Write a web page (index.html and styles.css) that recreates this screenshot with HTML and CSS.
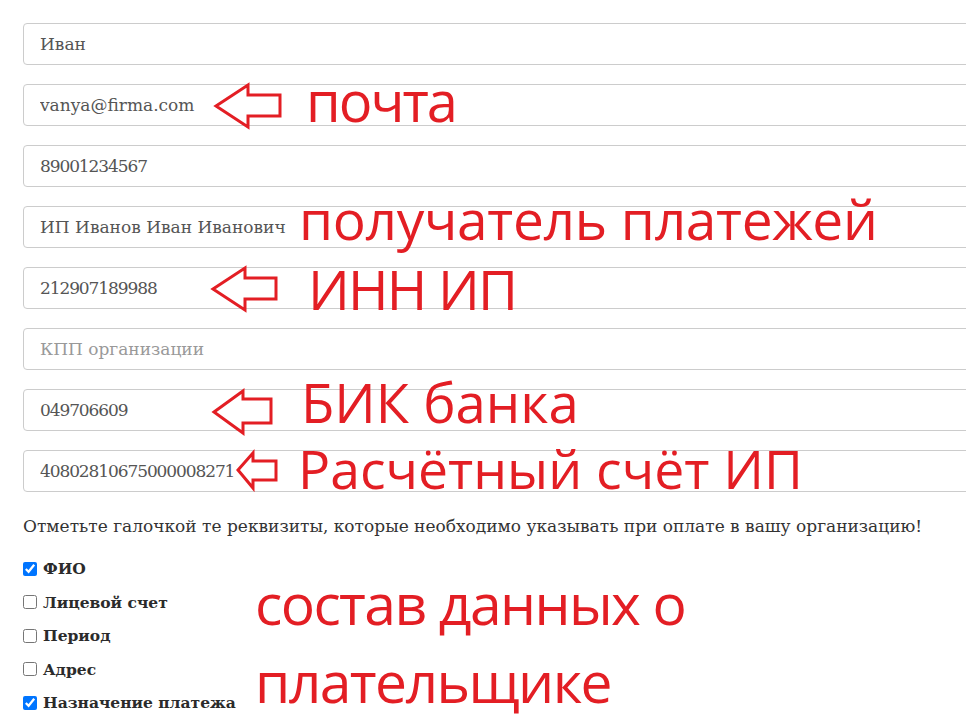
FILE: index.html
```html
<!DOCTYPE html>
<html lang="ru">
<head>
<meta charset="utf-8">
<title>Реквизиты</title>
<link rel="stylesheet" href="styles.css">
</head>
<body>
<div class="page">
  <form class="form">
    <div class="fields">
      <input class="field" type="text" value="Иван">
      <input class="field" type="text" value="vanya@firma.com">
      <input class="field field-num" type="text" value="89001234567">
      <input class="field" type="text" value="ИП Иванов Иван Иванович">
      <input class="field field-num" type="text" value="212907189988">
      <input class="field" type="text" placeholder="КПП организации">
      <input class="field field-num" type="text" value="049706609">
      <input class="field field-num" type="text" value="40802810675000008271">
    </div>
    <p class="hint">Отметьте галочкой те реквизиты, которые необходимо указывать при оплате в вашу организацию!</p>
    <ul class="checks">
      <li class="check"><label class="check-label"><input class="check-box" type="checkbox" checked>ФИО</label></li>
      <li class="check"><label class="check-label"><input class="check-box" type="checkbox">Лицевой счет</label></li>
      <li class="check"><label class="check-label"><input class="check-box" type="checkbox">Период</label></li>
      <li class="check"><label class="check-label"><input class="check-box" type="checkbox">Адрес</label></li>
      <li class="check"><label class="check-label"><input class="check-box" type="checkbox" checked>Назначение платежа</label></li>
    </ul>
  </form>

  <div class="annotations">
    <svg class="arrows" width="966" height="722" viewBox="0 0 966 722">
      <polygon class="arrow" points="216,106 248,85 248,95 280,95 280,116 248,116 248,127"/>
      <polygon class="arrow" points="213,289 245,268 245,278 276,278 276,299 245,299 245,310"/>
      <polygon class="arrow" points="214,412 243,391 243,399 271,399 271,423 243,423 243,433"/>
      <polygon class="arrow" points="238,470 253,453 253,461 276,461 276,480 253,480 253,488"/>
    </svg>
    <div class="mark mark-mail">почта</div>
    <div class="mark mark-payee">получатель платежей</div>
    <div class="mark mark-inn">ИНН ИП</div>
    <div class="mark mark-bik">БИК банка</div>
    <div class="mark mark-acc">Расчётный счёт ИП</div>
    <div class="mark mark-payer">состав данных о<br>плательщике</div>
  </div>
</div>
</body>
</html>
```

FILE: styles.css
```css
html, body {
  margin: 0;
  padding: 0;
  background: #fff;
  overflow: hidden;
}

.page {
  position: relative;
  width: 966px;
  height: 722px;
  overflow: hidden;
  padding: 23px 0 0 23px;
  box-sizing: border-box;
  font-family: "DejaVu Serif", "Liberation Serif", serif;
}

.form {
  margin: 0;
}

.fields {
  display: flex;
  flex-direction: column;
  gap: 19px;
}

.field {
  display: block;
  box-sizing: border-box;
  width: 980px;
  height: 42px;
  margin: 0;
  padding: 0 16px;
  border: 1px solid #cccccc;
  border-radius: 4px;
  background: #fff;
  font-family: "DejaVu Serif", "Liberation Serif", serif;
  font-size: 17px;
  color: #555555;
  outline: none;
}

.field-num {
  letter-spacing: -1.1px;
}

.field::placeholder {
  color: #999999;
}

.hint {
  margin: 22px 0 0;
  font-size: 17px;
  line-height: 24px;
  color: #333333;
}

.checks {
  list-style: none;
  margin: 14px 0 0;
  padding: 0;
}

.check {
  height: 33.5px;
  display: flex;
  align-items: center;
}

.check-label {
  display: flex;
  align-items: center;
  font-size: 15.5px;
  font-weight: bold;
  color: #2b2b2b;
}

.check-box {
  width: 14px;
  height: 14px;
  margin: 0 6px 0 0;
}

.annotations {
  position: absolute;
  inset: 0;
  pointer-events: none;
}

.arrows {
  position: absolute;
  left: 0;
  top: 0;
}

.arrow {
  fill: #ffffff;
  stroke: #e31e24;
  stroke-width: 3;
  stroke-linejoin: miter;
}

.mark {
  position: absolute;
  font-family: "Open Sans", "Noto Sans", sans-serif;
  color: #e31e24;
  line-height: 1;
  white-space: nowrap;
}

.mark-mail {
  left: 306px;
  top: 72px;
  font-size: 56px;
  letter-spacing: -2px;
}

.mark-payee {
  left: 299px;
  top: 191px;
  font-size: 55px;
  letter-spacing: -0.3px;
}

.mark-inn {
  left: 308px;
  top: 261px;
  font-size: 55px;
  letter-spacing: -1.8px;
}

.mark-bik {
  left: 301px;
  top: 375px;
  font-size: 54.5px;
}

.mark-acc {
  left: 298px;
  top: 442px;
  font-size: 53.5px;
}

.mark-payer {
  left: 255px;
  top: 564px;
  font-size: 57px;
  line-height: 78px;
  letter-spacing: -1.6px;
}
```
